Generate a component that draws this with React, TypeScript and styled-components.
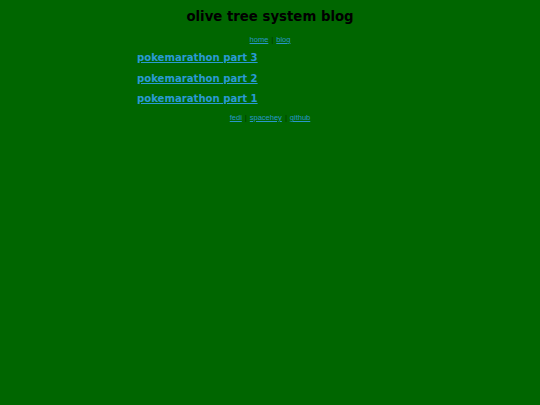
import React from "react";
import styled, { createGlobalStyle } from "styled-components";

const Global = createGlobalStyle`
  html, body { margin: 0; padding: 0; background: #006600; }
  body { font-family: "DejaVu Sans", sans-serif; }
`;

const Page = styled.div`
  display: flex;
  flex-direction: column;
  align-items: center;
  padding-top: 9px;
`;

const Title = styled.h1`
  margin: 0;
  font-family: "DejaVu Sans", sans-serif;
  font-weight: bold;
  font-size: 13.3px;
  line-height: 16px;
  color: #000;
`;

const Nav = styled.nav`
  margin-top: 10px;
  font-family: "Liberation Sans", Arial, sans-serif;
  font-size: 7.5px;
  line-height: 9px;
  color: #003300;
  display: flex;
  gap: 3px;
`;

const SmallLink = styled.a`
  color: #2a96c8;
  text-decoration: underline;
`;

const Posts = styled.main`
  width: 266px;
  margin-top: 7px;
  display: flex;
  flex-direction: column;
  gap: 7.5px;
`;

const PostLink = styled.a`
  font-family: "DejaVu Sans", sans-serif;
  font-weight: bold;
  font-size: 10.1px;
  line-height: 13px;
  color: #2a9ad4;
  text-decoration: underline;
`;

const Footer = styled(Nav)`
  margin-top: 8px;
`;

const Sep = styled.span`
  color: #003300;
`;

export default function App() {
  return (
    <>
      <Global />
      <Page>
        <Title>olive tree system blog</Title>
        <Nav>
          <SmallLink href="#">home</SmallLink>
          <Sep>|</Sep>
          <SmallLink href="#">blog</SmallLink>
        </Nav>
        <Posts>
          <PostLink href="#">pokemarathon part 3</PostLink>
          <PostLink href="#">pokemarathon part 2</PostLink>
          <PostLink href="#">pokemarathon part 1</PostLink>
        </Posts>
        <Footer>
          <SmallLink href="#">fedi</SmallLink>
          <Sep>|</Sep>
          <SmallLink href="#">spacehey</SmallLink>
          <Sep>|</Sep>
          <SmallLink href="#">github</SmallLink>
        </Footer>
      </Page>
    </>
  );
}
